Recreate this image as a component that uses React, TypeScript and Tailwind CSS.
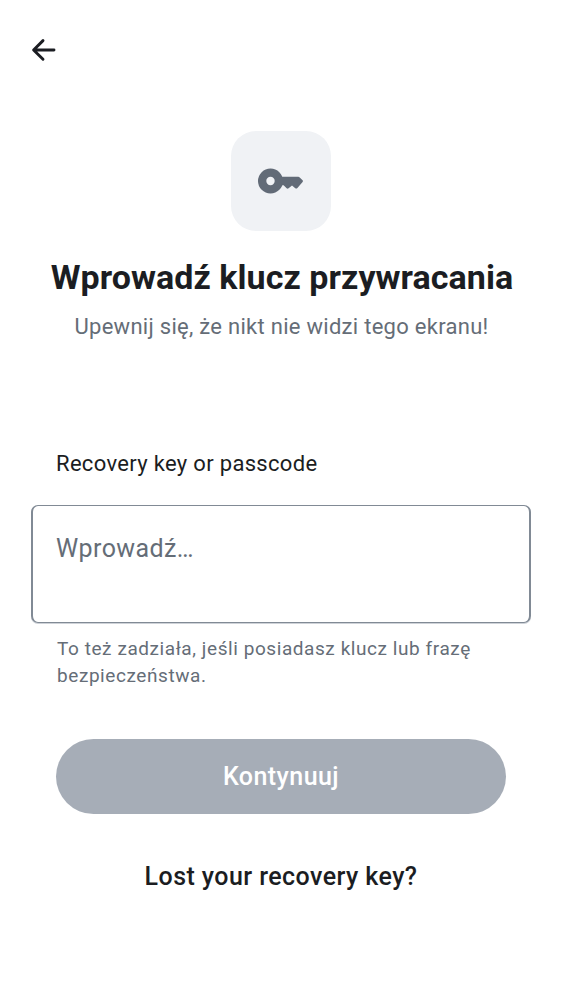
export default function App() {
  return (
    <main className="flex h-[1000px] w-[562px] flex-col bg-white font-['Roboto',sans-serif] text-[#1b1d22]">
      <header className="flex h-[100px] items-center pl-[28px]">
        <button aria-label="Wstecz" className="block">
          <svg width="30" height="30" viewBox="0 0 30 30" fill="none" stroke="currentColor" strokeWidth="2.9" strokeLinecap="round" strokeLinejoin="round">
            <path d="M15 5.6 5.6 15 15 24.3M5.8 15H26" />
          </svg>
        </button>
      </header>
      <div className="mt-[31px] flex h-[100px] w-[100px] items-center justify-center self-center rounded-[25px] bg-[#f0f2f5] text-[#626b77]">
        <svg width="50" height="30" viewBox="25 35 50 30" fill="currentColor" stroke="none">
          <path fillRule="evenodd" d="M39.5 37.5a12.5 12.5 0 1 0 0 25a12.5 12.5 0 0 0 0-25Zm0 8.3a4.2 4.2 0 1 1 0 8.4a4.2 4.2 0 0 1 0-8.4Z" />
          <path d="M50 45.8H67.2Q68.1 45.8 68.7 46.4L71.6 49.2Q72.4 50 71.6 50.9L66.4 57Q65.4 58.1 64.3 57.2L61 54.6L57.6 57.3Q56.6 58.1 55.6 57.2L52.6 54.3H50Z" />
        </svg>
      </div>
      <h1 className="mt-[26px] h-[40px] pl-[2px] text-center text-[34px] leading-[40px] font-bold tracking-[0.06px] whitespace-nowrap">Wprowadź klucz przywracania</h1>
      <p className="mt-[17px] pl-px text-center text-[22px] leading-[25px] tracking-[0.28px] text-[#656d77]">Upewnij się, że nikt nie widzi tego ekranu!</p>
      <label htmlFor="key" className="mt-[112px] ml-[56px] text-[22px] leading-[26px] tracking-[0.32px]">Recovery key or passcode</label>
      <div className="mx-[31px] mt-[28px] h-[118px] rounded-[7px] border-x-2 border-y border-[#818a95] shadow-[0_1px_0_#ced2d8]">
        <textarea id="key" placeholder="Wprowadź…" className="block h-full w-full resize-none px-[23px] pt-[28px] text-[25px] leading-[30px] tracking-[0.4px] outline-none placeholder:text-[#656d77]" />
      </div>
      <p className="mt-[12px] ml-[57px] text-[19px] leading-[27px] tracking-[0.57px] text-[#656d77]">To też zadziała, jeśli posiadasz klucz lub frazę<br />bezpieczeństwa.</p>
      <button className="mx-[56px] mt-[50px] h-[75px] rounded-full bg-[#a6adb7] text-[25px] font-medium tracking-[0.44px] text-white">Kontynuuj</button>
      <button className="mt-[44px] h-[36px] text-[25px] font-medium tracking-[0.43px]">Lost your recovery key?</button>
    </main>
  );
}
